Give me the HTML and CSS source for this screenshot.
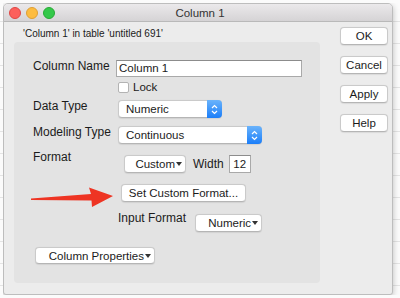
FILE: index.html
```html
<!DOCTYPE html>
<html lang="en">
<head>
    <meta charset="UTF-8">
    <meta name="viewport" content="width=device-width, initial-scale=1.0">
    <title>Column 1</title>
    <link rel="stylesheet" href="styles.css">
</head>
<body>
    <div class="window">
        <div class="titlebar">
            <div class="lights">
                <span class="light red"></span>
                <span class="light yellow"></span>
                <span class="light green"></span>
            </div>
            <div class="title">Column 1</div>
        </div>
        <div class="content">
            <div class="main">
                <div class="caption">'Column 1' in table 'untitled 691'</div>
                <div class="panel">
                    <div class="row row-name">
                        <span class="label">Column Name</span>
                        <span class="text-field name-field">Column 1</span>
                    </div>
                    <div class="row row-lock">
                        <span class="checkbox"></span>
                        <span class="check-label">Lock</span>
                    </div>
                    <div class="row row-data">
                        <span class="label">Data Type</span>
                        <span class="popup data-popup">Numeric<span class="stepper"><svg width="7" height="11" viewBox="0 0 7 11"><path d="M1 4 L3.5 1.5 L6 4 M1 7 L3.5 9.5 L6 7" fill="none" stroke="#fff" stroke-width="1.2"/></svg></span></span>
                    </div>
                    <div class="row row-model">
                        <span class="label">Modeling Type</span>
                        <span class="popup model-popup">Continuous<span class="stepper"><svg width="7" height="11" viewBox="0 0 7 11"><path d="M1 4 L3.5 1.5 L6 4 M1 7 L3.5 9.5 L6 7" fill="none" stroke="#fff" stroke-width="1.2"/></svg></span></span>
                    </div>
                    <div class="row row-format">
                        <span class="label label-format">Format</span>
                        <span class="pulldown custom-pulldown">Custom<svg class="caret" width="6" height="4" viewBox="0 0 6 4"><path d="M0 0 H6 L3 4 Z" fill="#333"/></svg></span>
                        <span class="width-label">Width</span>
                        <span class="text-field width-field">12</span>
                    </div>
                    <div class="row row-set">
                        <span class="push set-button">Set Custom Format...</span>
                    </div>
                    <div class="row row-input">
                        <span class="label label-input">Input Format</span>
                        <span class="pulldown input-pulldown">Numeric<svg class="caret" width="6" height="4" viewBox="0 0 6 4"><path d="M0 0 H6 L3 4 Z" fill="#333"/></svg></span>
                    </div>
                    <div class="row row-props">
                        <span class="pulldown props-pulldown">Column Properties<svg class="caret" width="6" height="4" viewBox="0 0 6 4"><path d="M0 0 H6 L3 4 Z" fill="#333"/></svg></span>
                    </div>
                </div>
            </div>
            <div class="side">
                <span class="push side-button">OK</span>
                <span class="push side-button">Cancel</span>
                <span class="push side-button">Apply</span>
                <span class="push side-button">Help</span>
            </div>
        </div>
        <!-- annotation arrow drawn over the dialog -->
        <svg class="arrow" width="88" height="24" viewBox="0 0 88 24">
            <path d="M2 12.5 L62 8 L60 1.5 L84 10 L63 21 L62.5 14.5 L2 14 Z" fill="#ee3423"/>
        </svg>
    </div>
</body>
</html>
```

FILE: styles.css
```css
* {
    box-sizing: border-box;
}
body {
    margin: 3px 0 0 3px;
    font-family: "Liberation Sans", Arial, sans-serif;
    color: #1b1b1b;
    background-color: #fbfbfb;
    background-image: repeating-linear-gradient(to bottom, transparent 0, transparent 21px, #e4e4e4 21px, #e4e4e4 22px);
}
.window {
    position: relative;
    width: 390px;
    height: 292px;
    background-color: #ececec;
    border: 1px solid #bdbdbd;
    border-radius: 5px 5px 3px 3px;
    box-shadow: 0 2px 6px rgba(0, 0, 0, 0.25);
    display: flex;
    flex-direction: column;
    overflow: hidden;
}
.titlebar {
    height: 18px;
    flex: none;
    display: grid;
    grid-template-columns: 1fr auto 1fr;
    align-items: center;
    background: linear-gradient(#ebe9eb, #d5d3d5);
    border-bottom: 1px solid #b9b9b9;
}
.lights {
    display: flex;
    gap: 5px;
    padding-left: 5px;
}
.light {
    width: 12px;
    height: 12px;
    border-radius: 50%;
}
.red { background: #fc605c; border: 1px solid #df4744; }
.yellow { background: #fdbc40; border: 1px solid #de9f34; }
.green { background: #34c84a; border: 1px solid #27aa35; }
.title {
    font-size: 11.5px;
    color: #333;
    padding-left: 4px;
}
.content {
    flex: 1;
    display: flex;
    padding: 0 4px 11px 10px;
}
.main {
    width: 306px;
    display: flex;
    flex-direction: column;
    padding-top: 6px;
}
.caption {
    font-size: 10px;
    line-height: 12px;
    margin-left: 9px;
    margin-bottom: 2px;
}
.panel {
    flex: 1;
    background-color: #e3e3e3;
    border-radius: 4px;
    padding: 18px 0 0 19px;
}
.side {
    margin-left: 20px;
    padding-top: 5px;
    display: flex;
    flex-direction: column;
    gap: 11px;
}
.row {
    display: flex;
    align-items: flex-start;
}
.label {
    width: 83px;
    font-size: 12px;
    line-height: 14px;
    margin-top: -1px;
    white-space: nowrap;
}
.label-format {
    margin-top: -5px;
}
.text-field {
    height: 17px;
    background: #fff;
    border: 1px solid #a9a9a9;
    border-top-color: #8c8c8c;
    font-size: 11.5px;
    line-height: 15px;
    padding-left: 2px;
}
.name-field {
    width: 186px;
}
.row-lock {
    margin-top: 5px;
    padding-left: 85px;
    height: 11px;
    align-items: center;
}
.checkbox {
    width: 11px;
    height: 11px;
    background: #fff;
    border: 1px solid #b3b3b3;
    border-radius: 2px;
}
.check-label {
    margin-left: 4px;
    font-size: 11.5px;
    line-height: 11px;
}
.row-data { margin-top: 7px; }
.row-model { margin-top: 8px; }
.row-format { margin-top: 11px; }
.row-set { margin-top: 11px; padding-left: 88px; }
.row-input { margin-top: 12px; padding-left: 85px; }
.row-props { margin-top: 15px; padding-left: 2px; }
.popup, .pulldown, .push {
    display: flex;
    align-items: center;
    height: 18px;
    background: #fff;
    border: 1px solid #cacaca;
    border-bottom-color: #b5b5b5;
    border-radius: 4px;
    box-shadow: 0 0.5px 1px rgba(0, 0, 0, 0.08);
    font-size: 11.5px;
    white-space: nowrap;
}
.popup {
    position: relative;
    margin-left: 2px;
    padding-left: 7px;
}
.data-popup { width: 104px; }
.model-popup { width: 144px; }
.stepper {
    position: absolute;
    top: -1px;
    right: -1px;
    width: 15px;
    height: 18px;
    display: flex;
    align-items: center;
    justify-content: center;
    background: linear-gradient(#6ab3fb, #1b7ef9);
    border-radius: 0 4px 4px 0;
}
.pulldown {
    justify-content: flex-end;
    padding-right: 3px;
}
.caret {
    margin-left: 1px;
}
.custom-pulldown {
    width: 62px;
    margin-left: 8px;
}
.width-label {
    font-size: 12px;
    line-height: 18px;
    margin-left: 7px;
}
.width-field {
    width: 22px;
    height: 18px;
    margin-left: 5px;
    line-height: 16px;
    text-align: center;
    padding-left: 0;
}
.push {
    justify-content: center;
}
.set-button {
    width: 125px;
}
.label-input {
    width: auto;
    margin-top: -3px;
    margin-right: 9px;
}
.input-pulldown {
    width: 67px;
}
.props-pulldown {
    width: 120px;
    height: 17px;
}
.side-button {
    width: 48px;
}
.arrow {
    position: absolute;
    left: 25px;
    top: 182px;
}
```
